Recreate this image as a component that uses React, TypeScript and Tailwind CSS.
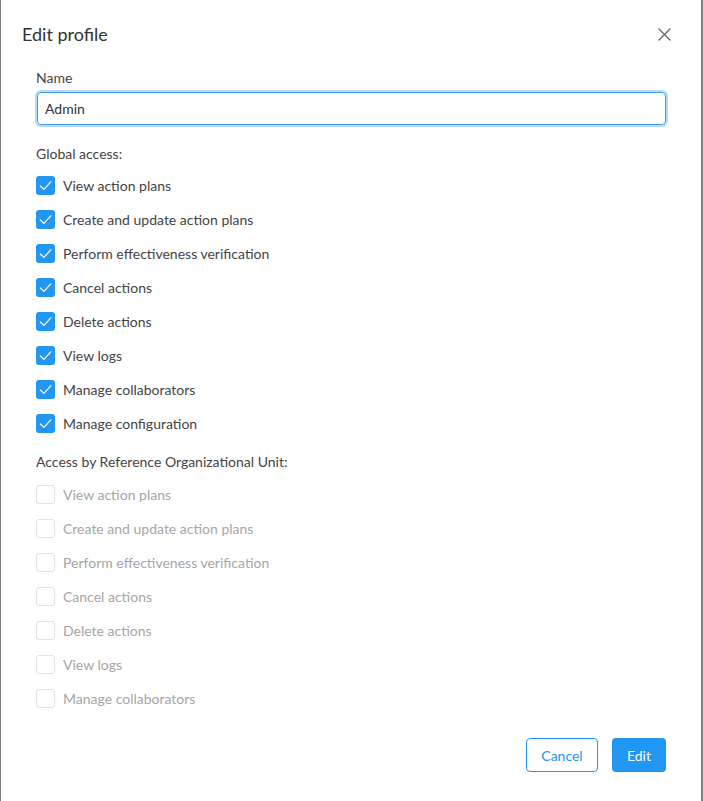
import { useState } from "react";

const permissions = [
  "View action plans",
  "Create and update action plans",
  "Perform effectiveness verification",
  "Cancel actions",
  "Delete actions",
  "View logs",
  "Manage collaborators",
  "Manage configuration",
];

const unitPermissions = permissions.slice(0, 7);

function Check({ checked, disabled }: { checked: boolean; disabled?: boolean }) {
  if (!checked) {
    return (
      <span
        className={
          "w-[19px] h-[19px] rounded-[3px] border-[1.5px] bg-white shrink-0 " +
          (disabled ? "border-[#e3e3e3]" : "border-[#bbbbbb]")
        }
      />
    );
  }
  return (
    <span className="w-[19px] h-[19px] rounded-[3px] bg-[#2196f3] shrink-0 flex items-center justify-center">
      <svg width="19" height="19" viewBox="0 0 19 19" fill="none">
        <path d="M4.3 10 L7.9 13.4 L14.8 5.8" stroke="white" strokeWidth="1.2" strokeLinecap="round" strokeLinejoin="round" />
      </svg>
    </span>
  );
}

export default function App() {
  const [name, setName] = useState("Admin");
  const [global, setGlobal] = useState<boolean[]>(permissions.map(() => true));

  return (
    <div
      className="w-full h-[801px] bg-[#808080] pl-[1px] overflow-hidden"
      style={{ fontFamily: "Lato, 'Noto Sans', sans-serif" }}
    >
      <div className="w-[700px] h-[801px] bg-white flex flex-col">
        {/* header */}
        <div className="flex items-center justify-between pl-[21px] pr-[29px] pt-[22px]">
          <h2 className="text-[18px] leading-[24px] text-[#333]">Edit profile</h2>
          <button className="w-[16px] h-[16px] flex items-center justify-center text-[#666]">
            <svg width="13" height="13" viewBox="0 0 13 13" fill="none">
              <path d="M1 1 L12 12 M12 1 L1 12" stroke="currentColor" strokeWidth="1.3" strokeLinecap="round" />
            </svg>
          </button>
        </div>

        {/* body */}
        <div className="pl-[35px] pr-[34px] flex flex-col">
          <label className="mt-[22px] text-[14px] leading-[20px] text-[#444]">Name</label>
          <input
            value={name}
            onChange={(e) => setName(e.target.value)}
            className="mt-[4px] mx-[1px] h-[33px] px-[7px] rounded-[4px] border border-[#3d9ee8] shadow-[0_0_0_2px_#b5dbf8] text-[14px] text-[#333] outline-none"
          />

          <p className="mt-[19px] text-[14px] leading-[20px] text-[#444]">Global access:</p>
          <div className="mt-[4px] flex flex-col">
            {permissions.map((p, i) => (
              <label
                key={p}
                className="h-[34px] flex items-center gap-[8px] cursor-pointer"
                onClick={() => setGlobal(global.map((v, j) => (j === i ? !v : v)))}
              >
                <Check checked={global[i]} />
                <span className="text-[14px] text-[#444]">{p}</span>
              </label>
            ))}
          </div>

          <p className="mt-[12px] text-[14px] leading-[20px] text-[#444]">
            Access by Reference Organizational Unit:
          </p>
          <div className="mt-[5px] flex flex-col">
            {unitPermissions.map((p) => (
              <div key={p} className="h-[34px] flex items-center gap-[8px]">
                <Check checked={false} disabled />
                <span className="text-[14px] text-[#a6a6a6]">{p}</span>
              </div>
            ))}
          </div>

          <div className="mt-[23px] mr-[1px] flex justify-end gap-[14px]">
            <button className="w-[72px] h-[34px] rounded-[4px] border border-[#2196f3] text-[#2196f3] text-[14px] bg-white">
              Cancel
            </button>
            <button className="w-[54px] h-[34px] rounded-[4px] bg-[#2196f3] text-white text-[14px]">
              Edit
            </button>
          </div>
        </div>
      </div>
    </div>
  );
}
